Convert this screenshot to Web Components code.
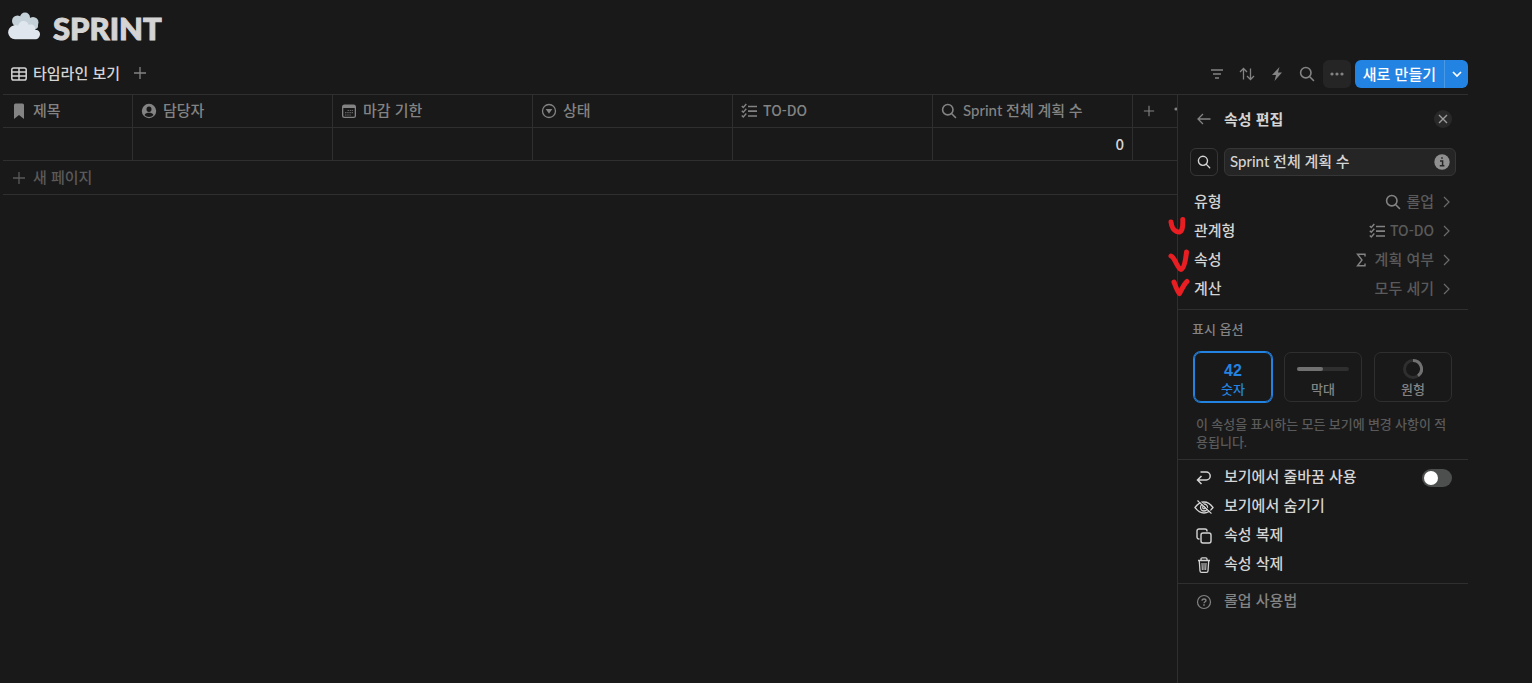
<!DOCTYPE html>
<html lang="ko">
<head>
<meta charset="utf-8">
<title>SPRINT</title>
<style>
  html, body { height: 100%; }
  body {
    --mixed: Lato, "Noto Sans CJK KR", sans-serif;
    margin: 0;
    background: #191919;
    color: #d4d4d4;
    font: 500 15px/20px "Noto Sans CJK KR", sans-serif;
    overflow: hidden;
  }
</style>
</head>
<body>
<sprint-page>
  <page-title slot="title">SPRINT</page-title>
  <view-bar slot="bar">타임라인 보기</view-bar>
  <data-table slot="table"></data-table>
  <edit-panel slot="panel"></edit-panel>
</sprint-page>

<script>
(function () {
  const icons = {
    cloud: [32, 28, `<g fill="#c5d1d8"><circle cx="17" cy="5.500" r="5"/><circle cx="9.500" cy="9" r="5.500"/><circle cx="25" cy="10.500" r="5.500"/><circle cx="17" cy="12" r="8"/><circle cx="27" cy="14" r="3"/></g><path fill="#dfe6ee" d="M7 27.300a7 7 0 0 1-1.500-13.800 5 5 0 0 1 4.500.3C11 10.500 13 9 15.500 9c2.500 0 4.500 1.600 5.200 4 3.300-1.300 7 .8 6.800 5 2.500-.5 4.500 1.300 4.500 4 0 3-2 5.300-5 5.300z"/>`],
    table: [16, 14, `<g fill="none" stroke="currentColor" stroke-width="1.500"><rect x=".8" y="1" width="14.400" height="12" rx="1.800"/><path d="M1 5h14M1 9h14M8 1v12"/></g>`],
    plus: [14, 14, `<path d="M7 1v12M1 7h12" fill="none" stroke="currentColor" stroke-width="1.300"/>`],
    filter: [14, 14, `<path d="M1 3h12M3 7h8M5 11h4" fill="none" stroke="currentColor" stroke-width="1.400"/>`],
    sort: [16, 14, `<path d="M4.500 12.500v-11M1 5l3.500-3.500L8 5M11.500 1.500v11M8 9l3.500 3.500L15 9" fill="none" stroke="currentColor" stroke-width="1.300"/>`],
    bolt: [14, 16, `<path d="M9.500 1L2 9h4l-1.500 6L12 6.500H8z" fill="currentColor"/>`],
    search: [16, 16, `<path d="M11 11l3.500 3.500M12 6.700a5.200 5.200 0 1 1-10.400 0 5.200 5.200 0 0 1 10.400 0z" fill="none" stroke="currentColor" stroke-width="1.600" stroke-linecap="round"/>`],
    dots: [16, 16, `<g fill="currentColor"><circle cx="3" cy="8" r="1.600"/><circle cx="8" cy="8" r="1.600"/><circle cx="13" cy="8" r="1.600"/></g>`],
    down: [10, 10, `<path d="M1 3l4 4 4-4" fill="none" stroke="currentColor" stroke-width="1.700"/>`],
    right: [8, 14, `<path d="M1 2l5 5-5 5" fill="none" stroke="currentColor" stroke-width="1.200"/>`],
    back: [14, 14, `<path d="M13.500 7H1M6 2L1 7l5 5" fill="none" stroke="currentColor" stroke-width="1.300"/>`],
    close: [10, 10, `<path d="M1 1l8 8M9 1L1 9" fill="none" stroke="currentColor" stroke-width="1.400"/>`],
    info: [16, 16, `<circle cx="8" cy="8" r="7.700" fill="currentColor"/><path d="M6 7h2.600v4.500M5.800 11.700h4.600M7.200 4h1.600" fill="none" stroke="#252525" stroke-width="1.500"/>`],
    bookmark: [16, 16, `<path d="M3 2q0-1.500 1.500-1.500h7Q13 .5 13 2v14l-5-4-5 4z" fill="currentColor"/>`],
    person: [16, 16, `<path fill="currentColor" fill-rule="evenodd" d="M8 .8a7.200 7.200 0 1 0 0 14.400A7.200 7.200 0 0 0 8 .8zM8 3.500a2.500 2.700 0 1 1 0 5.400 2.500 2.700 0 0 1 0-5.400zM3.500 11.900C4.500 10.200 6 9.800 8 9.800s3.500.4 4.500 2.100A6 6 0 0 1 8 13.900a6 6 0 0 1-4.500-2z"/>`],
    calendar: [16, 16, `<path fill="currentColor" fill-rule="evenodd" d="M3.500 1.500h9a2.500 2.500 0 0 1 2.500 2.500v8.500a2.500 2.500 0 0 1-2.500 2.500h-9A2.500 2.500 0 0 1 1 12.500V4a2.500 2.500 0 0 1 2.500-2.500zM2.300 5v7.500c0 .8.500 1.200 1.200 1.200h9c.7 0 1.200-.4 1.200-1.200V5z"/><path d="M6.500 7.500H12M4 9.700h8M4 12h6" stroke="currentColor" stroke-width="1.200" stroke-dasharray="1.500 .7" opacity=".7"/>`],
    status: [16, 16, `<circle cx="8" cy="8" r="6.500" fill="none" stroke="currentColor" stroke-width="1.300"/><path d="M4.700 6h6.600L8 10.800z" fill="currentColor"/>`],
    checks: [16, 16, `<path d="M7 3.500h9M7 8.200h9M7 13h9" stroke="currentColor" stroke-width="1.700"/><path d="M.8 3l1.500 1.500L5.300 1M.8 7.700l1.500 1.500 3-3.500M.8 12.500L2.300 14l3-3.500" fill="none" stroke="currentColor" stroke-width="1.400"/>`],
    sigma: [16, 16, `<path d="M11 4.500V2.200H3.500L8 8l-4.500 5.800H11v-2.300" fill="none" stroke="currentColor" stroke-width="1.400"/>`],
    wrap: [16, 16, `<path d="M4.500 2h5.700a4 4 0 0 1 0 8H2M5.500 6l-4 4 4 4" fill="none" stroke="currentColor" stroke-width="1.500"/>`],
    hide: [20, 16, `<g fill="none" stroke="currentColor" stroke-width="1.300"><path d="M1 8.500Q5 3 10 3t9 5.500Q15 14 10 14T1 8.500z"/><circle cx="10" cy="8.500" r="3.500"/><circle cx="10" cy="8.500" r="1.300"/><path d="M3.500 1.500l14 13"/></g><path d="M4.800 1.300l13 12" stroke="#191919"/>`],
    copy: [16, 16, `<g fill="none" stroke="currentColor" stroke-width="1.400"><rect x="5" y="5" width="10" height="10" rx="2"/><path d="M3.500 11H3a2 2 0 0 1-2-2V3a2 2 0 0 1 2-2h6a2 2 0 0 1 2 2v.500"/></g>`],
    trash: [16, 16, `<g fill="none" stroke="currentColor" stroke-width="1.300"><path d="M2 3.500h12M5 3V2q0-1.200 1.200-1.200h3.600Q11 .8 11 2v1M3.300 4l.7 10q.1 1.300 1.500 1.300h5q1.400 0 1.500-1.300l.7-10"/><path d="M6 6l.3 7M8 6v7M10 6l-.3 7" stroke-width="1"/></g>`],
    help: [16, 16, `<g fill="none" stroke="currentColor"><circle cx="8" cy="8" r="6.500" stroke-width="1.200"/><path d="M6 6.700C6 5.400 6.800 5 8 5s2 .6 2 1.600C10 7.800 8 7.800 8 9.300" stroke-width="1.300"/><path d="M8 10.300v1.500" stroke-width="1.500"/></g>`],
    bar: [52, 4, `<rect width="52" height="4" rx="2" fill="#2f2f2f"/><rect width="26" height="4" rx="2" fill="#717171"/>`],
    ring: [20, 20, `<g fill="none" stroke-width="3"><circle cx="10" cy="10" r="8.500" stroke="#2f2f2f"/><path d="M10 1.500a8.500 8.500 0 0 1 5 15.400" stroke="#717171"/></g>`],
  };

  function define(name, html, setup) {
    const template = document.createElement("template");
    template.innerHTML = `
      <style>
        *, :host { box-sizing: border-box; }
        button {
          border: 0; padding: 0; background: none;
          color: inherit; font: inherit; cursor: pointer;
        }
      </style>${html}`;
    customElements.define(name, class extends HTMLElement {
      constructor() {
        super();
        this.attachShadow({ mode: "open" });
        this.shadowRoot.append(template.content.cloneNode(true));
      }
      connectedCallback() {
        setup?.(this, this.shadowRoot);
      }
    });
  }

  define("ui-icon", `
    <style>
      :host { display: inline-flex; flex: none; }
      svg { display: block; }
    </style>
    <span></span>
  `, (el, root) => {
    const [w, h, body] = icons[el.getAttribute("name")];
    const scale = Number(el.getAttribute("scale") || 1);
    root.querySelector("span").innerHTML =
      `<svg width="${Math.round(w * scale)}" height="${Math.round(h * scale)}" viewBox="0 0 ${w} ${h}" aria-hidden="true">${body}</svg>`;
  });

  define("page-title", `
    <style>
      :host { display: block; }
      h1 {
        display: flex; align-items: center; gap: 13px;
        margin: 0; padding: 8px 8px 4px;
        font: 900 31px/40px "Lato Black", Lato, sans-serif;
        -webkit-text-stroke: 1px currentColor;
      }
      ui-icon { padding-bottom: 4px; }
    </style>
    <h1><ui-icon name="cloud"></ui-icon><slot></slot></h1>
  `);

  define("view-bar", `
    <style>
      :host {
        display: flex; align-items: center; justify-content: space-between;
        margin-right: 64px; padding: 8px 0 6px 11px;
        height: 42px;
      }
      .tabs, .tools, .tab, .split { display: flex; align-items: center; }
      .tab { gap: 6px; }
      .tab slot { display: block; padding-bottom: 2px; }
      .tabs { gap: 13px; color: #838383; }
      .tab { color: #d4d4d4; }
      .tools { color: #838383; }
      .tools > button {
        display: grid; place-items: center;
        width: 28px; height: 28px; margin-left: 2px; border-radius: 6px;
      }
      .tools > .more { background: #252525; }
      .split {
        margin-left: 4px; border-radius: 6px; overflow: hidden;
        background: #2383e2; color: #fff;
      }
      .split button { height: 28px; }
      .new { padding: 0 8px; }
      .menu { display: grid; place-items: center; width: 24px; border-left: 1px solid #4a99e6; }
    </style>
    <div class="tabs">
      <button class="tab"><ui-icon name="table"></ui-icon><slot></slot></button>
      <button aria-label="보기 추가"><ui-icon name="plus"></ui-icon></button>
    </div>
    <div class="tools">
      <button aria-label="필터"><ui-icon name="filter"></ui-icon></button>
      <button aria-label="정렬"><ui-icon name="sort"></ui-icon></button>
      <button aria-label="자동화"><ui-icon name="bolt"></ui-icon></button>
      <button aria-label="검색"><ui-icon name="search"></ui-icon></button>
      <button class="more" aria-label="더보기"><ui-icon name="dots"></ui-icon></button>
      <div class="split">
        <button class="new">새로 만들기</button>
        <button class="menu" aria-label="템플릿"><ui-icon name="down"></ui-icon></button>
      </div>
    </div>
  `);

  const columns = [
    ["bookmark", "제목"],
    ["person", "담당자"],
    ["calendar", "마감 기한"],
    ["status", "상태"],
    ["checks", "TO-DO"],
    ["search", "Sprint 전체 계획 수"],
  ];

  define("data-table", `
    <style>
      :host { display: block; padding-left: 3px; overflow: hidden; }
      table { width: 100%; table-layout: fixed; border-collapse: separate; border-spacing: 0; }
      col { width: 200px; }
      col:first-child { width: 130px; }
      col:last-child { width: auto; }
      th, td {
        height: 33px; padding: 0 8px;
        border-right: 1px solid #2f2f2f; border-bottom: 1px solid #2f2f2f;
      }
      th:last-child, td:last-child { border-right: 0; }
      th { color: #838383; font-weight: 500; text-align: left; }
      th div { display: flex; align-items: center; gap: 6px; white-space: nowrap; }
      th span { padding-bottom: 2px; }
      .checks { font-size: 14px; }
      .search { font-family: var(--mixed); }
      th .extra { gap: 18px; padding-left: 2px; }
      td { text-align: right; }
      .add {
        display: flex; align-items: center; gap: 7px;
        width: 100%; height: 34px; padding-left: 9px;
        border-bottom: 1px solid #2f2f2f; color: #5a5a5a;
      }
      .add span { padding-bottom: 2px; }
    </style>
    <table>
      <colgroup></colgroup>
      <thead><tr></tr></thead>
      <tbody><tr></tr></tbody>
    </table>
    <button class="add"><ui-icon name="plus"></ui-icon><span>새 페이지</span></button>
  `, (el, root) => {
    root.querySelector("colgroup").innerHTML = "<col>".repeat(columns.length + 1);
    root.querySelector("thead tr").innerHTML = columns
      .map(([icon, label]) => `<th><div><ui-icon name="${icon}"></ui-icon><span class="${icon}">${label}</span></div></th>`)
      .join("") + `<th><div class="extra">
        <button aria-label="속성 추가"><ui-icon name="plus" scale="0.86"></ui-icon></button>
        <button aria-label="속성 더보기"><ui-icon name="dots"></ui-icon></button>
      </div></th>`;
    root.querySelector("tbody tr").innerHTML = columns
      .map((c, i) => `<td>${i === columns.length - 1 ? "0" : ""}</td>`)
      .join("") + "<td></td>";
  });

  define("setting-row", `
    <style>
      :host { display: block; }
      button {
        display: flex; align-items: center; gap: 9px;
        width: 100%; height: 29px; padding: 0 17px 0 16px;
      }
      .value { display: flex; align-items: center; gap: 5px; margin-left: auto; color: #5a5a5a; }
      .label, slot[name="value"] { display: block; padding-bottom: 2px; }
      ::slotted(ui-icon) { color: #838383; }
      ::slotted(small) { font-size: 14px; }
      ui-icon { color: #6b6b6b; }
    </style>
    <button><slot class="label"></slot><span class="value"><slot name="icon"></slot><slot name="value"></slot></span><ui-icon name="right"></ui-icon></button>
  `);

  define("display-option", `
    <style>
      :host { display: block; }
      button {
        display: grid; grid-template-rows: 20px 18px; place-items: center;
        align-content: center; gap: 2px;
        width: 100%; height: 50px; padding-top: 2px;
        border: 1px solid #2f2f2f; border-radius: 7px;
        color: #838383; font-size: 13px; line-height: 18px;
      }
      :host([selected]) button { border-color: #2383e2; box-shadow: 0 0 0 1px #2383e2; color: #2383e2; }
      slot[name] { display: block; padding-top: 2px; }
      ::slotted(b) { display: block; padding-top: 3px; font: bold 16px/20px "Liberation Sans", sans-serif; }
      ::slotted(ui-icon) { display: flex; }
    </style>
    <button><slot name="preview"></slot><span><slot></slot></span></button>
  `, (el, root) => {
    root.querySelector("button").setAttribute("aria-pressed", el.hasAttribute("selected"));
  });

  define("menu-item", `
    <style>
      :host { display: block; }
      button {
        display: flex; align-items: center; gap: 10px;
        width: 100%; height: 29px; padding: 0 16px;
      }
      .icon { display: grid; place-items: center; width: 20px; }
      slot { display: block; padding-bottom: 4px; }
    </style>
    <button><span class="icon"></span><slot></slot></button>
  `, (el, root) => {
    root.querySelector(".icon").innerHTML = `<ui-icon name="${el.getAttribute("icon")}"></ui-icon>`;
  });

  define("toggle-item", `
    <style>
      :host { display: block; }
      label { display: flex; align-items: center; gap: 10px; height: 29px; padding: 0 16px; }
      ui-icon { width: 20px; justify-content: center; }
      slot { display: block; padding-bottom: 4px; }
      input {
        appearance: none; display: flex; align-items: center;
        width: 30px; height: 18px; margin: 0 0 0 auto; padding: 0 2px;
        border-radius: 9px; background: #4d4f4f;
      }
      input::before { content: ""; width: 14px; height: 14px; border-radius: 50%; background: #fff; }
      input:checked { justify-content: flex-end; background: #2383e2; }
    </style>
    <label><ui-icon name="wrap"></ui-icon><slot></slot><input type="checkbox" role="switch"></label>
  `);

  // hand-drawn ticks sit across the panel's left edge
  define("red-marks", `
    <style>
      :host { position: absolute; left: -12px; top: 120px; pointer-events: none; }
      svg { display: block; }
    </style>
    <svg width="26" height="86" viewBox="0 0 26 86" fill="none" stroke="#e81e23" stroke-width="5" stroke-linecap="round" stroke-linejoin="round" aria-hidden="true">
      <path d="M5 7c.5 4 2 8 5.500 9.500 5.500 2.500 6.500-3 6.300-12"/>
      <path d="M5 41c4 1.500 6 12 10 13.500 3-1 4.500-8 5.500-17.500"/>
      <path d="M8 67c1.500 4 3 9 5.500 11.500C16 74 18 69 21 66.500"/>
    </svg>
  `);

  define("edit-panel", `
    <style>
      :host {
        display: block; position: relative; width: 291px;
        border-left: 1px solid #2f2f2f;
      }
      header { display: flex; align-items: center; gap: 10px; height: 48px; padding: 0 16px; }
      header button:first-child { width: 20px; display: grid; place-items: center; color: #838383; }
      h2 { flex: 1; margin: 0; font-size: 15px; line-height: 20px; font-weight: 600; }
      .close {
        display: grid; place-items: center; width: 18px; height: 18px;
        border-radius: 50%; background: #292929; color: #9b9b9b;
      }
      .name { display: flex; gap: 6px; padding: 5px 12px 11px; }
      .name > button {
        display: grid; place-items: center; width: 28px; height: 28px;
        border: 1px solid #363636; border-radius: 6px;
      }
      .field {
        display: flex; flex: 1; align-items: center; gap: 6px; min-width: 0; height: 28px;
        padding: 0 5px; border: 1px solid #363636; border-radius: 6px; background: #252525;
      }
      input {
        flex: 1; min-width: 0; padding: 0 0 2px; border: 0; outline: 0;
        background: none; color: inherit; font: inherit; font-family: var(--mixed);
      }
      .field ui-icon { color: #8f8f8f; }
      section { border-bottom: 1px solid #2f2f2f; }
      .rows { padding-bottom: 6px; }
      .display { padding: 9px 16px 8px; }
      h3 { margin: 0 -2px; font-size: 13px; line-height: 20px; font-weight: 500; color: #838383; }
      .options { display: grid; grid-template-columns: repeat(3, 1fr); gap: 12px; margin: 13px 0; }
      .display p { margin: 0 2px; font: 500 13px/18px var(--mixed); color: #5a5a5a; }
      .actions { padding: 3px 0 4px; }
      .help { padding-top: 3px; color: #838383; }
    </style>
    <header>
      <button aria-label="뒤로"><ui-icon name="back"></ui-icon></button>
      <h2>속성 편집</h2>
      <button class="close" aria-label="닫기"><ui-icon name="close"></ui-icon></button>
    </header>
    <div class="name">
      <button aria-label="아이콘"><ui-icon name="search" scale="0.86"></ui-icon></button>
      <div class="field">
        <input type="text" aria-label="속성 이름" value="Sprint 전체 계획 수">
        <ui-icon name="info"></ui-icon>
      </div>
    </div>
    <section class="rows">
      <setting-row>유형<ui-icon slot="icon" name="search"></ui-icon><span slot="value">롤업</span></setting-row>
      <setting-row>관계형<ui-icon slot="icon" name="checks"></ui-icon><small slot="value">TO-DO</small></setting-row>
      <setting-row>속성<ui-icon slot="icon" name="sigma"></ui-icon><span slot="value">계획 여부</span></setting-row>
      <setting-row>계산<span slot="value">모두 세기</span></setting-row>
    </section>
    <section class="display">
      <h3>표시 옵션</h3>
      <div class="options">
        <display-option selected><b slot="preview">42</b>숫자</display-option>
        <display-option><ui-icon slot="preview" name="bar"></ui-icon>막대</display-option>
        <display-option><ui-icon slot="preview" name="ring"></ui-icon>원형</display-option>
      </div>
      <p>이 속성을 표시하는 모든 보기에 변경 사항이 적용됩니다.</p>
    </section>
    <section class="actions">
      <toggle-item>보기에서 줄바꿈 사용</toggle-item>
      <menu-item icon="hide">보기에서 숨기기</menu-item>
      <menu-item icon="copy">속성 복제</menu-item>
      <menu-item icon="trash">속성 삭제</menu-item>
    </section>
    <menu-item class="help" icon="help">롤업 사용법</menu-item>
    <red-marks></red-marks>
  `);

  define("sprint-page", `
    <style>
      :host { display: flex; flex-direction: column; min-height: 100%; }
      main { display: flex; flex: 1; margin-right: 64px; margin-left: 3px; border-top: 1px solid #2f2f2f; }
      ::slotted(data-table) { flex: 1; min-width: 0; margin-left: -3px; }
      ::slotted(edit-panel) { flex: none; }
    </style>
    <slot name="title"></slot>
    <slot name="bar"></slot>
    <main><slot name="table"></slot><slot name="panel"></slot></main>
  `);
})();
</script>
</body>
</html>
